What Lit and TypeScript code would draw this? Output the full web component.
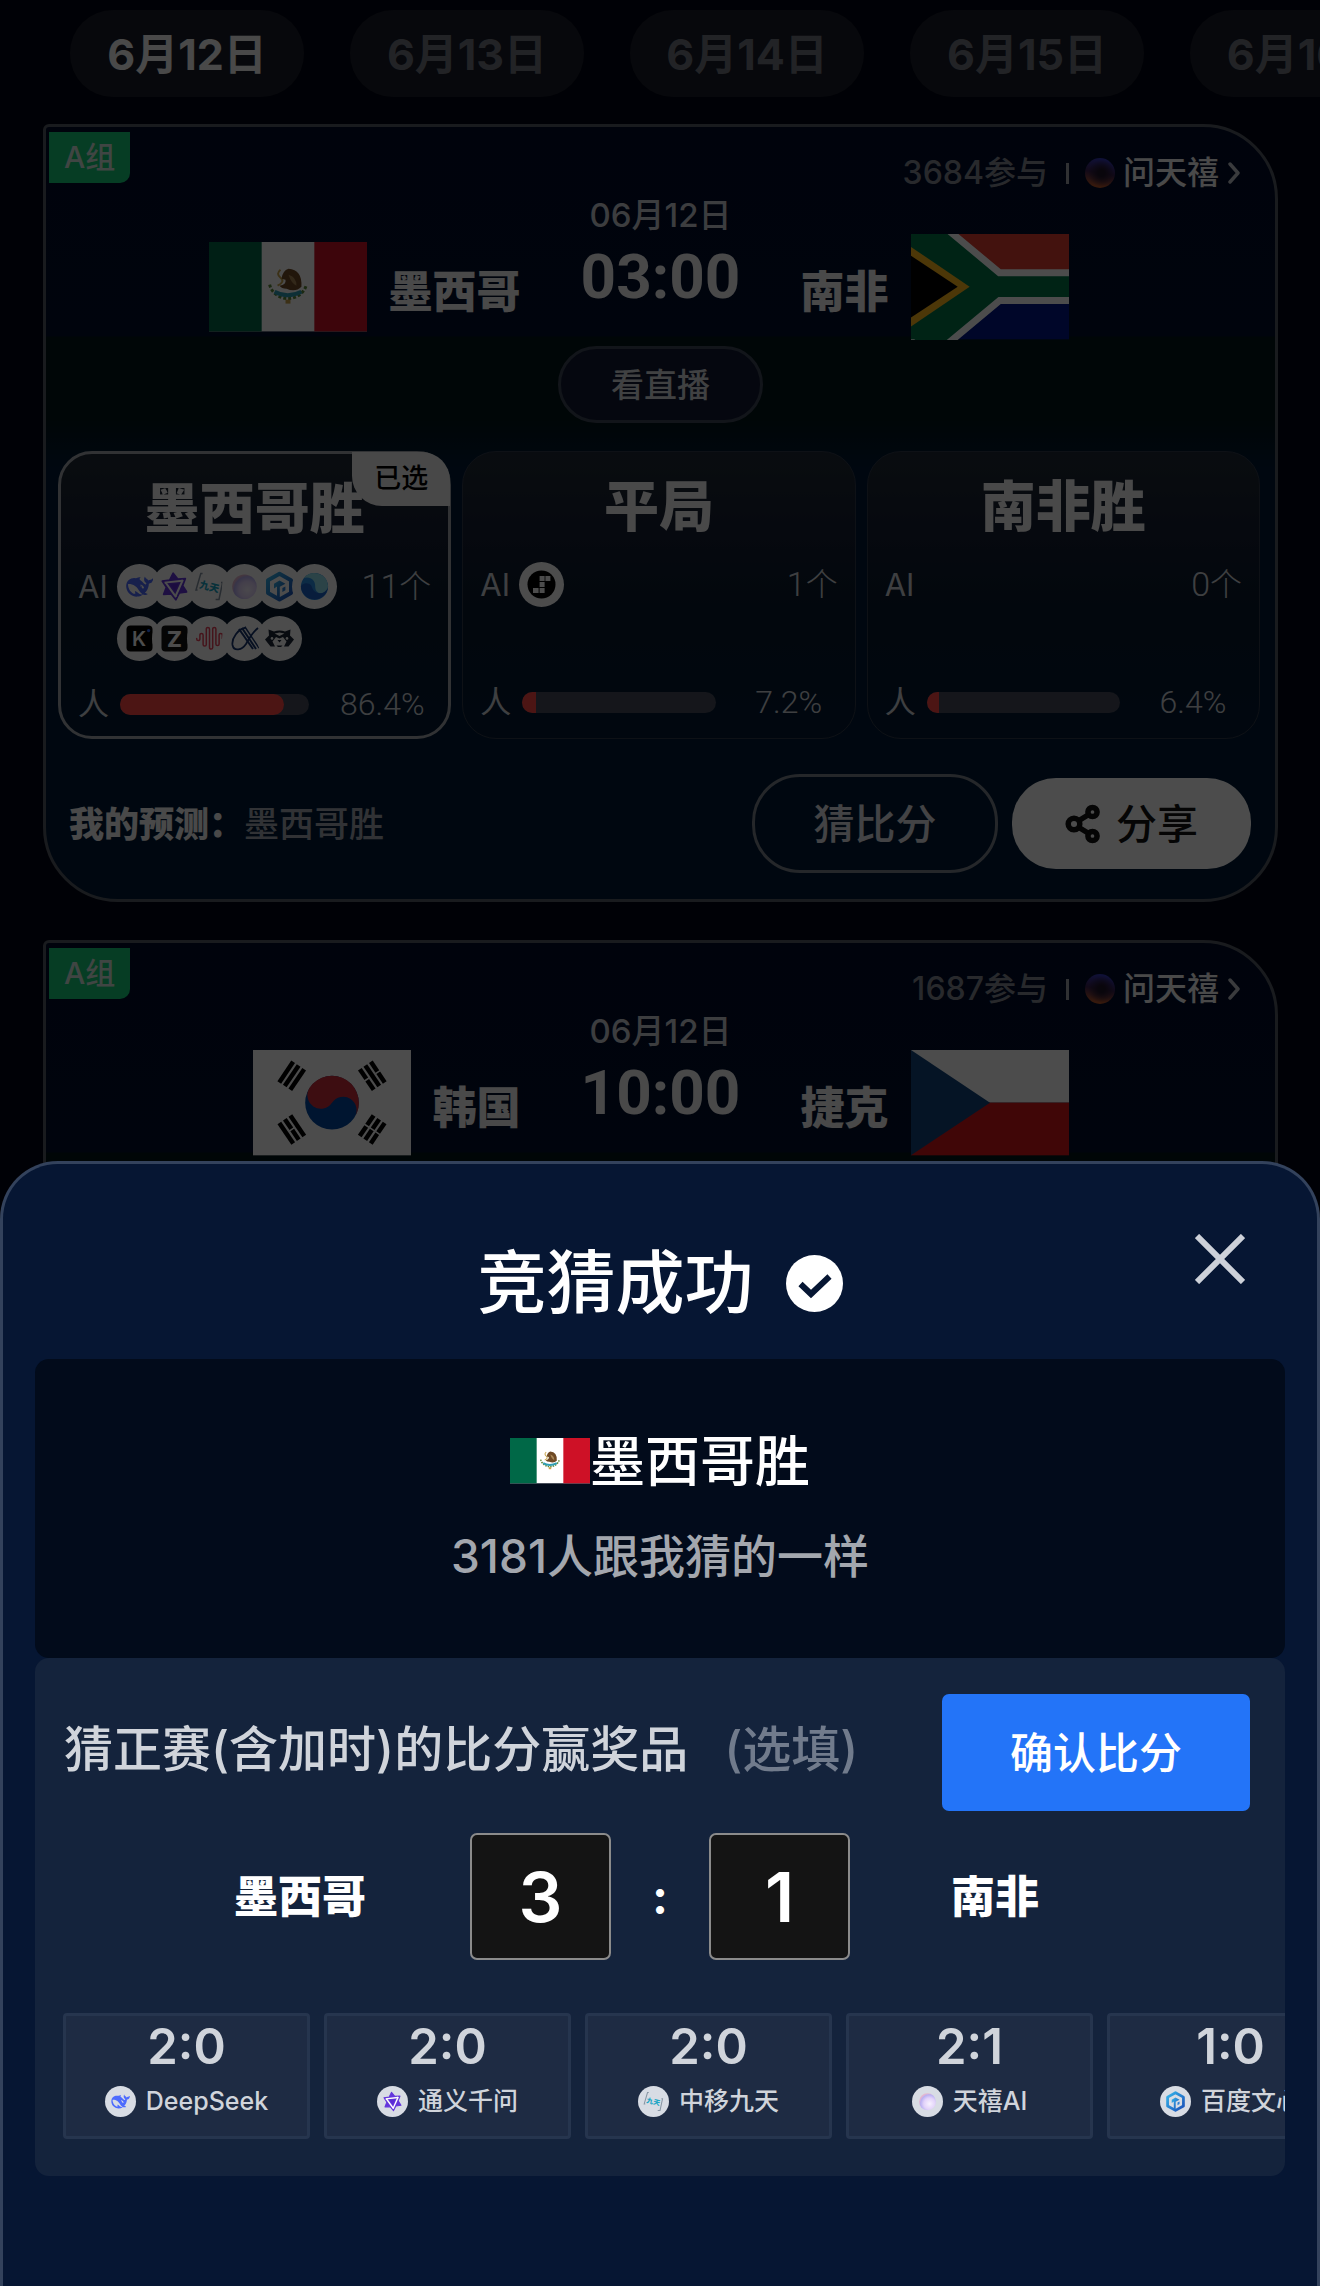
import { LitElement, html, svg, css, nothing, type TemplateResult } from "lit";
import { customElement, property } from "lit/decorators.js";
import { classMap } from "lit/directives/class-map.js";
import { styleMap } from "lit/directives/style-map.js";

/* ---------- data ---------- */

interface Option { name: string; models: string[]; percent: number; chosen?: boolean; }
interface Team { name: string; flag: string; }
interface Match {
  group: string; joined: number; date: string; time: string;
  home: Team; away: Team; live?: string; options?: Option[]; mine?: string;
}

const dates = ["6月12日", "6月13日", "6月14日", "6月15日", "6月16日"];

const matches: Match[] = [
  {
    group: "A组", joined: 3684, date: "06月12日", time: "03:00",
    home: { name: "墨西哥", flag: "mx" }, away: { name: "南非", flag: "za" },
    live: "看直播", mine: "墨西哥胜",
    options: [
      {
        name: "墨西哥胜", percent: 86.4, chosen: true,
        models: ["deepseek", "qwen", "jiutian", "tianxi", "baidu", "yuanbao", "kimi", "zhipu", "wave", "ox", "raccoon"],
      },
      { name: "平局", percent: 7.2, models: ["step"] },
      { name: "南非胜", percent: 6.4, models: [] },
    ],
  },
  {
    group: "A组", joined: 1687, date: "06月12日", time: "10:00",
    home: { name: "韩国", flag: "kr" }, away: { name: "捷克", flag: "cz" },
  },
];

const guesses = [
  { score: "2:0", model: "deepseek", label: "DeepSeek" },
  { score: "2:0", model: "qwen", label: "通义千问" },
  { score: "2:0", model: "jiutian", label: "中移九天" },
  { score: "2:1", model: "tianxi", label: "天禧AI" },
  { score: "1:0", model: "baidu", label: "百度文心" },
];

/* ---------- drawings ---------- */

const whale =
  "M23.748 4.482c-.254-.124-.364.113-.512.234-.051.039-.094.09-.137.136-.372.397-.806.657-1.373.626-.829-.046-1.537.214-2.163.848-.133-.782-.575-1.248-1.247-1.548-.352-.156-.708-.311-.955-.65-.172-.241-.219-.51-.305-.774-.055-.16-.11-.323-.293-.35-.2-.031-.278.136-.356.276-.313.572-.434 1.202-.422 1.84.027 1.436.633 2.58 1.838 3.393.137.093.172.187.129.323-.082.28-.18.552-.266.833-.055.179-.137.217-.329.14a5.526 5.526 0 01-1.736-1.18c-.857-.828-1.631-1.742-2.597-2.458a11.365 11.365 0 00-.689-.471c-.985-.957.13-1.743.388-1.836.27-.098.093-.432-.779-.428-.872.004-1.67.295-2.687.684a3.055 3.055 0 01-.465.137 9.597 9.597 0 00-2.883-.102c-1.885.21-3.39 1.102-4.497 2.623C.082 8.606-.231 10.684.152 12.85c.403 2.284 1.569 4.175 3.36 5.653 1.858 1.533 3.997 2.284 6.438 2.14 1.482-.085 3.133-.284 4.994-1.86.47.234.962.327 1.78.397.63.059 1.236-.03 1.705-.128.735-.156.684-.837.419-.961-2.155-1.004-1.682-.595-2.113-.926 1.096-1.296 2.746-2.642 3.392-7.003.05-.347.007-.565 0-.845-.004-.17.035-.237.23-.256a4.173 4.173 0 001.545-.475c1.396-.763 1.96-2.015 2.093-3.517.02-.23-.004-.467-.247-.588zM11.581 18c-2.089-1.642-3.102-2.183-3.52-2.16-.392.024-.321.471-.235.763.09.288.207.486.371.739.114.167.192.416-.113.603-.673.416-1.842-.14-1.897-.167-1.361-.802-2.5-1.86-3.301-3.307-.774-1.393-1.224-2.887-1.298-4.482-.02-.386.093-.522.477-.592a4.696 4.696 0 011.529-.039c2.132.312 3.946 1.265 5.468 2.774.868.86 1.525 1.887 2.202 2.891.72 1.066 1.494 2.082 2.48 2.914.348.292.625.514.891.677-.802.09-2.14.11-3.054-.614zm1-6.44a.306.306 0 01.415-.287.302.302 0 01.2.288.306.306 0 01-.31.307.303.303 0 01-.304-.308zm3.11 1.596c-.2.081-.399.151-.59.16a1.245 1.245 0 01-.798-.254c-.274-.23-.47-.358-.552-.758a1.73 1.73 0 01.016-.588c.07-.327-.008-.537-.239-.727-.187-.156-.426-.199-.688-.199a.559.559 0 01-.254-.078c-.11-.054-.2-.19-.114-.358.028-.054.16-.186.192-.21.356-.202.767-.136 1.146.016.352.144.618.408 1.001.782.391.451.462.576.685.914.176.265.336.537.445.848.067.195-.019.354-.25.452z";

const glyphs: Record<string, TemplateResult> = {
  deepseek: svg`<g transform="translate(9.2 9.5) scale(1.12)"><path fill="#4d6bfe" d=${whale} /></g>`,
  qwen: svg`
    <g transform="rotate(-6 22.5 22.5)">
      <path fill="#6435dc" stroke="#6435dc" stroke-width="1.5" stroke-linejoin="round"
        d="M22.5 9 L26.6 15.4 L34.2 15.8 L30.8 22.5 L34.2 29.2 L26.6 29.6 L22.5 36 L18.4 29.6 L10.8 29.2 L14.2 22.5 L10.8 15.8 L18.4 15.4 Z" />
      <g stroke="#fff" stroke-width="2">
        ${[0, 120, 240].map((a) => svg`<path d="M13 17.6 H31" transform=${`rotate(${a} 22.5 22.5)`} />`)}
      </g>
      <path fill="#5a2bd4" d="M18.2 20 H26.8 L22.5 27.4 Z" />
    </g>`,
  jiutian: svg`
    <g fill="none" stroke="#8795a3" stroke-width="1.5">
      <path d="M15.6 9.5 H13.8 L9 26 H10.6" />
      <path d="M34 18.500 H35.6 L32 35.500 H28.6" />
    </g>
    <text x="22.4" y="26.4" text-anchor="middle" font-size="10" font-weight="900" fill="#1aa5c4" transform="rotate(14 22.5 22.5)">九天</text>`,
  tianxi: svg`
    <defs>
      <radialGradient id="tx" cx="62%" cy="62%" r="62%">
        <stop offset="0" stop-color="#f8f2ff" /><stop offset=".55" stop-color="#e2d2fa" />
        <stop offset=".85" stop-color="#b9b0f2" /><stop offset="1" stop-color="#e6b7cf" />
      </radialGradient>
    </defs>
    <circle cx="22.5" cy="22.8" r="12.3" fill="url(#tx)" />`,
  baidu: svg`
    <defs>
      <linearGradient id="bd" x1="0" y1="0" x2="1" y2="1">
        <stop offset="0" stop-color="#35b4ea" /><stop offset="1" stop-color="#1a4fb8" />
      </linearGradient>
    </defs>
    <path fill="none" stroke="url(#bd)" stroke-width="4" stroke-linejoin="round" d="M22.5 9.8 L34 16.2 V29 L22.5 35.400 L11 29 V16.2 Z" />
    <path fill="url(#bd)" d="M17 19.8 L22.5 16.6 L28.4 19.8 L22.8 22.8 V34 H20 V22.600 L17 24.600 Z" />
    <path fill="#2b7fd6" d="M25.400 24 L28.4 22.4 V26.2 L25.400 28 Z" />`,
  yuanbao: svg`
    <circle cx="22.5" cy="22.5" r="13.6" fill="#2b8fe6" />
    <path fill="#8fe0ee" d="M12 14 A13.6 13.6 0 0 1 36 21.5 C36 28 30 31 26 28.5 C21.5 25.7 24.5 20.5 21.8 17 C19 13.2 14.6 13 12 14 Z" />
    <path fill="#1c62c9" d="M8.9 22.5 A13.6 13.6 0 0 0 35.9 24 C33 29.5 27.5 30.4 23.6 28 C19.5 25.5 20.6 21.6 17.6 20 C14 18.2 10 19.6 8.9 22.5 Z" />`,
  kimi: svg`
    <rect x="9.5" y="9.5" width="26" height="26" rx="4" fill="#000" />
    <text x="22" y="29.6" text-anchor="middle" font-size="20" font-weight="600" fill="#fff">K</text>
    <circle cx="31.6" cy="14.6" r="1.6" fill="#2f6bff" />`,
  zhipu: svg`
    <rect x="9.5" y="9.5" width="26" height="26" rx="4" fill="#111" />
    <text x="22.5" y="30.6" text-anchor="middle" font-size="22" font-weight="800" fill="#fff">Z</text>`,
  wave: svg`
    <path fill="none" stroke="#e8435a" stroke-width="1.5" stroke-linecap="round"
      d="M9.700 22.500 v.5 a1.600 1.600 0 0 0 3.200 0 v-4 a1.600 1.600 0 0 1 3.200 0 v9.500 a1.600 1.600 0 0 0 3.200 0 v-15.500 a1.600 1.600 0 0 1 3.200 0 v18.500 a1.600 1.600 0 0 0 3.200 0 v-18.500 a1.600 1.600 0 0 1 3.200 0 v15 a1.600 1.600 0 0 0 3.200 0 v-9 a1.600 1.600 0 0 1 3.200 0 v3.500" />`,
  ox: svg`
    <g fill="none" stroke="#17356e">
      <path stroke-width="1.8" d="M24 11.500 C16 13 9.500 22 10.500 29 C12 36 20 34 24 28 C27 22.500 31 16 36 12" />
      <path stroke-width="2" d="M17 13 L31 33" /><path stroke-width="2" d="M20 12 L34 33" /><path stroke-width="1.400" d="M23 11 L37 32" />
    </g>`,
  raccoon: svg`
    <path fill="#1d2636" d="M11.500 13.600 L17 15.400 Q22.5 13.800 28 15.400 L33.500 13.600 L33 19.5 L37 23.4 L31.500 30.500 H27 L29.500 25.5 L26 21 L22.5 22.6 L19 21 L15.500 25.5 L18 30.500 H13.500 L8 23.4 L12 19.5 Z" />
    <path fill="#fff" d="M17.6 17.6 L22.5 16.6 L27.4 17.6 L22.5 20 Z" />
    <circle cx="15" cy="22.4" r="1.3" fill="#fff" /><circle cx="30" cy="22.4" r="1.3" fill="#fff" />
    <path fill="#1d2636" d="M20.5 24 H24.5 L22.5 26.4 Z M19.500 29.500 H25.500 L24 31 H21 Z" />`,
  step: svg`
    <circle cx="22.5" cy="22.5" r="14" fill="#000" />
    <g fill="#fff">
      <rect x="20.6" y="14" width="5" height="5" /><rect x="26.4" y="14" width="5" height="5" />
      <rect x="20.6" y="20" width="5" height="5" />
      <rect x="20.6" y="26" width="5" height="5" /><rect x="14" y="26" width="5.6" height="5" />
    </g>`,
};

const trigram = (x: number, y: number, angle: number, broken: boolean[]) => svg`
  <g transform=${`translate(${x} ${y}) rotate(${angle})`} fill="#000">
    ${broken.map((b, i) => {
      const top = -9 + i * 6.7;
      return b
        ? svg`<rect x="-12.5" y=${top} width="11.7" height="4.5" /><rect x="0.8" y=${top} width="11.7" height="4.5" />`
        : svg`<rect x="-12.5" y=${top} width="25" height="4.5" />`;
    })}
  </g>`;

const flags: Record<string, { h: number; art: TemplateResult }> = {
  mx: {
    h: 90,
    art: svg`
      <rect width="159" height="90" fill="#fff" />
      <rect width="53" height="90" fill="#006847" /><rect x="106" width="53" height="90" fill="#ce1126" />
      <path fill="none" stroke="#5d8a3a" stroke-width="3" stroke-dasharray="3 2" d="M61 43 A19 18 0 0 0 98 43" />
      <path fill="none" stroke="#2f9fb5" stroke-width="4" d="M66 50 Q79 57 93 50" />
      <path fill="none" stroke="#c9a64e" stroke-width="2" d="M72 28 q-5 4 0 8 q5 4 -3 8" />
      <path fill="#6f4a25" d="M80 27 Q94 28 93 45 Q87 51 78 47 Q73 47 71 44 Q78 43 77 38 L73 37 Q74 29 80 27 Z" />
      <path fill="#a98656" d="M80 33 Q88 35 88 44 Q83 42 80 33 Z" />
      <rect x="77" y="58" width="5" height="4" fill="#c9a24a" />`,
  },
  za: {
    h: 106,
    art: svg`
      <rect width="159" height="53" fill="#e03c31" /><rect y="53" width="159" height="53" fill="#001489" />
      <path fill="none" stroke="#fff" stroke-width="35" d="M0 -17 L84 53 H170 M0 123 L84 53" />
      <path fill="none" stroke="#007749" stroke-width="21" d="M0 -17 L84 53 H170 M0 123 L84 53" />
      <path fill="#007749" d="M0 0 L10 0 L74 53 L10 106 L0 106 Z" />
      <path fill="#ffb81c" d="M0 13 L59 53 L0 93 Z" />
      <path fill="#000" d="M0 22 L47 53 L0 84 Z" />`,
  },
  kr: {
    h: 106,
    art: svg`
      <rect width="159" height="106" fill="#fff" />
      <circle cx="79.500" cy="53" r="27" fill="#0047a0" />
      <path fill="#cd2e3a" d="M57 38 A27 27 0 0 1 102 68 A13.500 13.500 0 0 0 79.500 53 A13.500 13.500 0 0 1 57 38 Z" />
      ${trigram(39, 26, -56, [false, false, false])}
      ${trigram(120, 26, 56, [true, false, true])}
      ${trigram(39, 80, 56, [false, true, false])}
      ${trigram(120, 80, -56, [true, true, true])}`,
  },
  cz: {
    h: 106,
    art: svg`
      <rect width="159" height="53" fill="#fff" /><rect y="53" width="159" height="53" fill="#d7141a" />
      <path fill="#11457e" d="M0 0 L79.500 53 L0 106 Z" />`,
  },
};

const family = css`Inter, "Noto Sans CJK SC", sans-serif`;
const slim = css`Roboto, "Noto Sans CJK SC", sans-serif`;

/* ---------- elements ---------- */

@customElement("team-flag")
class TeamFlag extends LitElement {
  @property() code = "mx";
  static styles = css`
    :host { display: block; width: 158px; flex: none; }
    svg { display: block; width: 100%; height: auto; }
  `;
  render() {
    const f = flags[this.code];
    return html`<svg viewBox="0 0 159 ${f.h}" aria-hidden="true">${f.art}</svg>`;
  }
}

@customElement("model-logo")
class ModelLogo extends LitElement {
  @property() name = "";
  static styles = css`
    :host { display: block; width: 45px; height: 45px; border-radius: 50%; background: #fff; flex: none; font-family: ${family}; }
    svg { display: block; width: 100%; height: 100%; }
  `;
  render() {
    return html`<svg viewBox="0 0 45 45" aria-hidden="true">${glyphs[this.name]}</svg>`;
  }
}

@customElement("option-card")
class OptionCard extends LitElement {
  @property({ attribute: false }) option!: Option;
  static styles = css`
    :host { display: grid; }
    .option {
      position: relative; display: flex; flex-direction: column; margin: 0; padding: 24px 17px 16px;
      border: 1px solid #30394a; border-radius: 34px; color: #d0d4da; text-align: left;
      background: linear-gradient(#202b36, #151e32 30%, #08192c 55%, #041a34);
      font: 400 31px/45px ${family};
    }
    .option.chosen { border: 3px solid #a4a8ae; }
    .picked {
      position: absolute; top: -2px; right: -2px; padding: 0 22px; border-radius: 0 28px 0 30px;
      background: #f0f0f0; color: #000; font: 500 27px/54px ${family};
    }
    .name { font-weight: 900; font-size: 55px; line-height: 60px; color: #f4f4f4; text-align: center; }
    .ai { display: flex; gap: 10px; margin-top: 26px; min-height: 98px; }
    .label { width: 29px; flex: none; }
    .logos { display: flex; flex-wrap: wrap; align-content: flex-start; row-gap: 7px; width: 214px; }
    .logos model-logo { margin-right: -10px; }
    .count { margin-left: auto; font-weight: 300; white-space: nowrap; font-size: 32px; }
    .num { font-family: ${slim}; font-size: 34px; font-weight: 300; }
    .people { display: flex; align-items: center; gap: 13px; margin-top: 26px; line-height: 32px; }
    .bar { flex: 1; height: 21px; border-radius: 11px; background: #464b5a; overflow: hidden; }
    .fill { height: 100%; background: #ff4643; }
    .chosen .fill { border-radius: 0 11px 11px 0; }
    .percent { width: 98px; padding-left: 11px; text-align: center; font-size: 32px; }
  `;
  render() {
    const o = this.option;
    return html`
      <button class=${classMap({ option: true, chosen: !!o.chosen })} aria-pressed=${o.chosen ? "true" : "false"}>
        <span class="name">${o.name}</span>
        ${o.chosen ? html`<span class="picked">已选</span>` : nothing}
        <span class="ai">
          <span class="label">AI</span>
          <span class="logos">${o.models.map((m) => html`<model-logo name=${m}></model-logo>`)}</span>
          <span class="count"><span class="num">${o.models.length}</span>个</span>
        </span>
        <span class="people">
          <span class="label">人</span>
          <span class="bar"><div class="fill" style=${styleMap({ width: `${o.percent}%` })}></div></span>
          <span class="percent num">${o.percent}%</span>
        </span>
      </button>`;
  }
}

@customElement("match-card")
class MatchCard extends LitElement {
  @property({ attribute: false }) match!: Match;
  static styles = css`
    :host { display: block; }
    .card {
      min-height: 400px; padding-top: 5px; border: 3px solid #555b66; border-radius: 6px 75px 75px 75px; color: #f4f4f4;
      background: linear-gradient(#000c2b, #000f2c 209px, #021518 210px, #021518 290px, #001a36 340px, #001a36);
      font: 500 32px/36px ${family};
    }
    .head { display: flex; justify-content: space-between; padding: 0 34px 0 3px; margin-bottom: 6px; }
    .group { align-self: flex-start; padding: 0 15px; border-radius: 0 0 10px 0; background: #14cd78; color: #d8e8e0; font-size: 30px; line-height: 51px; }
    .meta { display: flex; align-items: center; padding-top: 23px; }
    .joined { color: #868a94; }
    .rule { width: 3px; height: 21px; margin: 0 16px 0 18px; background: #a0a4ac; }
    .ask { display: flex; align-items: center; gap: 8px; color: inherit; text-decoration: none; }
    .orb { width: 30px; height: 30px; border-radius: 50%; background: radial-gradient(circle at 55% 50%, #20152a 15%, transparent 60%), linear-gradient(10deg, #b8562a 10%, #3c2050 50%, #3538b8 90%); }
    .chev { display: block; width: 14px; height: 22px; }
    .match { display: grid; grid-template-columns: 1fr 280px 1fr; }
    .team { display: flex; align-items: center; gap: 22px; height: 106px; padding-top: 37px; font-size: 44px; font-weight: 900; }
    .team span { padding-top: 10px; }
    .home { justify-content: flex-end; }
    .mid { display: flex; flex-direction: column; align-items: center; }
    .date { color: #c8cbd2; font-size: 33px; }
    .time { margin-top: 14px; font: 700 62px/60px ${slim}; }
    .live { margin-top: 39px; width: 205px; height: 77px; border: 3px solid #3f4658; border-radius: 39px; background: #111a33; color: #d6d9de; font: 500 33px/36px ${family}; }
    .options { display: grid; grid-template-columns: repeat(3, minmax(0, 1fr)); gap: 11px; margin-top: 28px; padding: 0 15px 0 12px; }
    .foot { display: flex; align-items: center; gap: 14px; padding: 35px 24px 26px 23px; font-size: 35px; }
    .mine { flex: 1; color: #a3a9b1; }
    .mine b { color: #f4f4f4; font-weight: 900; }
    .act { display: flex; align-items: center; justify-content: center; gap: 16px; padding: 0; font: 500 41px/48px ${family}; }
    .score { width: 246px; height: 99px; border: 3px solid #7c828c; border-radius: 48px; background: none; color: #e0e2e6; }
    .share { width: 239px; height: 91px; border: 0; border-radius: 44px; background: #fff; color: #111; }
    .share svg { display: block; width: 35px; height: 40px; }
  `;
  render() {
    const m = this.match;
    return html`
      <article class="card">
        <header class="head">
          <span class="group">${m.group}</span>
          <div class="meta">
            <span class="joined">${m.joined}参与</span><i class="rule"></i>
            <a class="ask" href="#ask"><i class="orb"></i>问天禧
              <svg class="chev" viewBox="0 0 14 22" aria-hidden="true"><path fill="none" stroke="#c4c7cd" stroke-width="3.4" stroke-linecap="round" stroke-linejoin="round" d="M3 2 L11 11 L3 20" /></svg>
            </a>
          </div>
        </header>
        <div class="match">
          <div class="team home"><team-flag code=${m.home.flag}></team-flag><span>${m.home.name}</span></div>
          <div class="mid">
            <span class="date">${m.date}</span><span class="time">${m.time}</span>
            ${m.live ? html`<button class="live">${m.live}</button>` : nothing}
          </div>
          <div class="team"><span>${m.away.name}</span><team-flag code=${m.away.flag}></team-flag></div>
        </div>
        ${m.options ? html`
          <div class="options">${m.options.map((o) => html`<option-card .option=${o}></option-card>`)}</div>
          <footer class="foot">
            <span class="mine"><b>我的预测：</b>${m.mine}</span>
            <button class="act score">猜比分</button>
            <button class="act share">
              <svg viewBox="0 0 35 40" aria-hidden="true"><g fill="none" stroke="#111" stroke-width="5.500"><circle cx="9" cy="20" r="5.800" /><circle cx="27.500" cy="8" r="4.600" /><circle cx="27.500" cy="32" r="4.600" /><path d="M14 16.500 L23 11 M14 23.500 L23 29" /></g></svg>
              分享
            </button>
          </footer>` : nothing}
      </article>`;
  }
}

@customElement("result-sheet")
class ResultSheet extends LitElement {
  static styles = css`
    :host { display: block; }
    .sheet {
      position: relative; padding: 83px 32px 110px; border: 3px solid #33425c; border-bottom: 0;
      border-radius: 58px 58px 0 0; background: #061633; color: #fff; font: 500 44px/60px ${family};
    }
    .title { display: flex; align-items: center; justify-content: center; gap: 32px; margin: 0 0 39px; font-size: 69px; line-height: 73px; font-weight: 500; }
    .title svg { display: block; width: 57px; height: 57px; }
    .close { position: absolute; top: 64px; right: 66px; width: 62px; height: 62px; padding: 6px; border: 0; background: none; }
    .close svg { display: block; width: 50px; height: 50px; }
    .result { display: flex; flex-direction: column; align-items: center; padding: 72px 0; border-radius: 14px; background: #020b1b; }
    .pick { display: flex; align-items: center; font-size: 55px; }
    .pick team-flag { width: 80px; }
    .same { margin-top: 35px; color: #a3a7ae; font-size: 46px; }
    .guess { overflow: hidden; padding: 36px 0 37px; border-radius: 14px; background: #14233c; }
    .line { display: flex; align-items: center; padding: 0 35px 0 29px; }
    .ask { flex: 1; padding-bottom: 5px; color: #d0d4db; font-size: 49px; white-space: nowrap; }
    .ask small { margin-left: 36px; color: #717b8c; font-size: 49px; }
    .ok { width: 308px; height: 117px; border: 0; border-radius: 7px; background: #2374f8; color: #fff; font: 500 43px/60px ${family}; }
    .versus { display: grid; grid-template-columns: 1fr 141px 98px 141px 1fr; align-items: center; margin-top: 22px; text-align: center; }
    .versus label { font-weight: 900; }
    .versus label:first-child { padding-right: 104px; text-align: right; }
    .versus label:last-child { padding-left: 101px; text-align: left; }
    .colon { font-size: 48px; font-weight: 700; }
    .goal { box-sizing: border-box; width: 100%; height: 127px; padding: 0; border: 2px solid #8b8b8b; border-radius: 7px; background: #141414; color: #fff; font: 600 69px/80px ${family}; text-align: center; }
    .chips { display: flex; gap: 14px; margin-top: 53px; padding-left: 28px; }
    .chip { flex: none; display: flex; flex-direction: column; align-items: center; width: 247px; height: 126px; padding: 4px 0 0; border: 3px solid #26354e; border-radius: 4px; background: #1e2b43; color: #d0d4db; font: 600 49px/54px ${family}; }
    .who { display: flex; align-items: center; gap: 10px; font-size: 25px; font-weight: 500; line-height: 32px; margin-top: 11px; }
    .who model-logo { width: 31px; height: 31px; background: #d8dce4; }
  `;
  render() {
    return html`
      <section class="sheet" role="dialog" aria-labelledby="done">
        <h2 class="title" id="done">竞猜成功
          <svg viewBox="0 0 57 57" aria-hidden="true"><circle cx="28.500" cy="28.500" r="28.500" fill="#fff" /><path fill="none" stroke="#061633" stroke-width="6" d="M14.500 29 L25 39 L43.500 21.500" /></svg>
        </h2>
        <button class="close" aria-label="关闭">
          <svg viewBox="0 0 50 50" aria-hidden="true"><path fill="none" stroke="#cdd1d9" stroke-width="6" d="M2 2 L48 48 M48 2 L2 48" /></svg>
        </button>
        <div class="result">
          <div class="pick"><team-flag code="mx"></team-flag>墨西哥胜</div>
          <div class="same">3181人跟我猜的一样</div>
        </div>
        <div class="guess">
          <div class="line">
            <span class="ask">猜正赛(含加时)的比分赢奖品<small>(选填)</small></span>
            <button class="ok">确认比分</button>
          </div>
          <div class="versus">
            <label for="home">墨西哥</label>
            <input class="goal" id="home" inputmode="numeric" .value=${"3"} />
            <span class="colon">:</span>
            <input class="goal" id="away" inputmode="numeric" .value=${"1"} />
            <label for="away">南非</label>
          </div>
          <div class="chips">
            ${guesses.map((g) => html`
              <button class="chip">${g.score}
                <span class="who"><model-logo name=${g.model}></model-logo>${g.label}</span>
              </button>`)}
          </div>
        </div>
      </section>`;
  }
}

@customElement("app-root")
class AppRoot extends LitElement {
  static styles = css`
    :host { display: block; }
    .page { position: relative; min-height: 100vh; overflow: hidden; background: #030614; }
    .tabs { display: flex; gap: 46px; padding: 10px 0 27px 70px; }
    .tab { flex: none; width: 234px; height: 87px; padding: 0; border: 0; border-radius: 43px; background: #191c29; color: #74777f; font: 700 43px/48px ${family}; }
    .tab.on { color: #f4f4f4; }
    .list { display: flex; flex-direction: column; gap: 38px; padding: 0 42px 0 43px; }
    .scrim { position: absolute; inset: 0; background: rgba(0, 0, 0, 0.7); }
    .drawer { position: absolute; left: 0; right: 0; bottom: 0; }
  `;
  render() {
    return html`
      <main class="page">
        <nav class="tabs">
          ${dates.map((d, i) => html`<button class=${classMap({ tab: true, on: i === 0 })}>${d}</button>`)}
        </nav>
        <div class="list">${matches.map((m) => html`<match-card .match=${m}></match-card>`)}</div>
        <div class="scrim"></div>
        <result-sheet class="drawer"></result-sheet>
      </main>`;
  }
}
